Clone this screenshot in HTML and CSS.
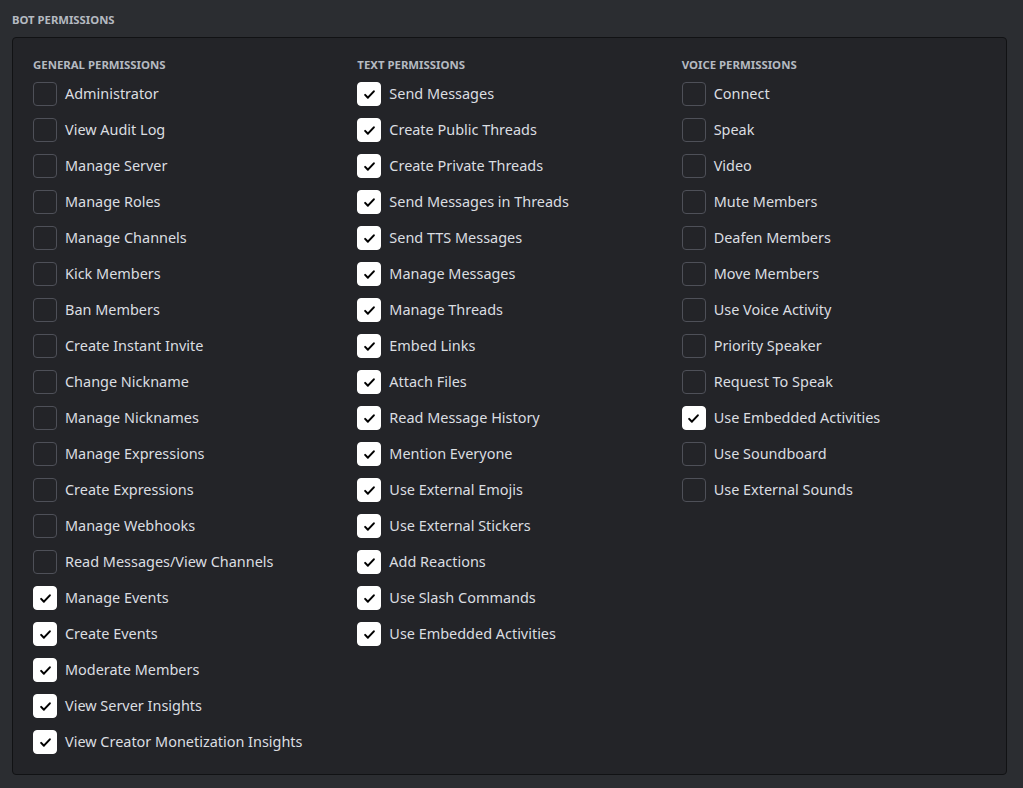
FILE: index.html
```html
<!DOCTYPE html>
<html>
<head>
<meta charset="utf-8">
<link rel="stylesheet" href="styles.css">
</head>
<body>
<div class="page">
  <h2 class="title">Bot Permissions</h2>
  <div class="panel">
    <div class="col">
      <h3 class="col-title">General Permissions</h3>
      <label class="row"><span class="box"></span><span class="label">Administrator</span></label>
      <label class="row"><span class="box"></span><span class="label">View Audit Log</span></label>
      <label class="row"><span class="box"></span><span class="label">Manage Server</span></label>
      <label class="row"><span class="box"></span><span class="label">Manage Roles</span></label>
      <label class="row"><span class="box"></span><span class="label">Manage Channels</span></label>
      <label class="row"><span class="box"></span><span class="label">Kick Members</span></label>
      <label class="row"><span class="box"></span><span class="label">Ban Members</span></label>
      <label class="row"><span class="box"></span><span class="label">Create Instant Invite</span></label>
      <label class="row"><span class="box"></span><span class="label">Change Nickname</span></label>
      <label class="row"><span class="box"></span><span class="label">Manage Nicknames</span></label>
      <label class="row"><span class="box"></span><span class="label">Manage Expressions</span></label>
      <label class="row"><span class="box"></span><span class="label">Create Expressions</span></label>
      <label class="row"><span class="box"></span><span class="label">Manage Webhooks</span></label>
      <label class="row"><span class="box"></span><span class="label">Read Messages/View Channels</span></label>
      <label class="row"><span class="box on"><svg viewBox="0 0 24 24"><path d="M6.5 12.5l3.5 3.5 7.5-8"/></svg></span><span class="label">Manage Events</span></label>
      <label class="row"><span class="box on"><svg viewBox="0 0 24 24"><path d="M6.5 12.5l3.5 3.5 7.5-8"/></svg></span><span class="label">Create Events</span></label>
      <label class="row"><span class="box on"><svg viewBox="0 0 24 24"><path d="M6.5 12.5l3.5 3.5 7.5-8"/></svg></span><span class="label">Moderate Members</span></label>
      <label class="row"><span class="box on"><svg viewBox="0 0 24 24"><path d="M6.5 12.5l3.5 3.5 7.5-8"/></svg></span><span class="label">View Server Insights</span></label>
      <label class="row"><span class="box on"><svg viewBox="0 0 24 24"><path d="M6.5 12.5l3.5 3.5 7.5-8"/></svg></span><span class="label">View Creator Monetization Insights</span></label>
    </div>
    <div class="col">
      <h3 class="col-title">Text Permissions</h3>
      <label class="row"><span class="box on"><svg viewBox="0 0 24 24"><path d="M6.5 12.5l3.5 3.5 7.5-8"/></svg></span><span class="label">Send Messages</span></label>
      <label class="row"><span class="box on"><svg viewBox="0 0 24 24"><path d="M6.5 12.5l3.5 3.5 7.5-8"/></svg></span><span class="label">Create Public Threads</span></label>
      <label class="row"><span class="box on"><svg viewBox="0 0 24 24"><path d="M6.5 12.5l3.5 3.5 7.5-8"/></svg></span><span class="label">Create Private Threads</span></label>
      <label class="row"><span class="box on"><svg viewBox="0 0 24 24"><path d="M6.5 12.5l3.5 3.5 7.5-8"/></svg></span><span class="label">Send Messages in Threads</span></label>
      <label class="row"><span class="box on"><svg viewBox="0 0 24 24"><path d="M6.5 12.5l3.5 3.5 7.5-8"/></svg></span><span class="label">Send TTS Messages</span></label>
      <label class="row"><span class="box on"><svg viewBox="0 0 24 24"><path d="M6.5 12.5l3.5 3.5 7.5-8"/></svg></span><span class="label">Manage Messages</span></label>
      <label class="row"><span class="box on"><svg viewBox="0 0 24 24"><path d="M6.5 12.5l3.5 3.5 7.5-8"/></svg></span><span class="label">Manage Threads</span></label>
      <label class="row"><span class="box on"><svg viewBox="0 0 24 24"><path d="M6.5 12.5l3.5 3.5 7.5-8"/></svg></span><span class="label">Embed Links</span></label>
      <label class="row"><span class="box on"><svg viewBox="0 0 24 24"><path d="M6.5 12.5l3.5 3.5 7.5-8"/></svg></span><span class="label">Attach Files</span></label>
      <label class="row"><span class="box on"><svg viewBox="0 0 24 24"><path d="M6.5 12.5l3.5 3.5 7.5-8"/></svg></span><span class="label">Read Message History</span></label>
      <label class="row"><span class="box on"><svg viewBox="0 0 24 24"><path d="M6.5 12.5l3.5 3.5 7.5-8"/></svg></span><span class="label">Mention Everyone</span></label>
      <label class="row"><span class="box on"><svg viewBox="0 0 24 24"><path d="M6.5 12.5l3.5 3.5 7.5-8"/></svg></span><span class="label">Use External Emojis</span></label>
      <label class="row"><span class="box on"><svg viewBox="0 0 24 24"><path d="M6.5 12.5l3.5 3.5 7.5-8"/></svg></span><span class="label">Use External Stickers</span></label>
      <label class="row"><span class="box on"><svg viewBox="0 0 24 24"><path d="M6.5 12.5l3.5 3.5 7.5-8"/></svg></span><span class="label">Add Reactions</span></label>
      <label class="row"><span class="box on"><svg viewBox="0 0 24 24"><path d="M6.5 12.5l3.5 3.5 7.5-8"/></svg></span><span class="label">Use Slash Commands</span></label>
      <label class="row"><span class="box on"><svg viewBox="0 0 24 24"><path d="M6.5 12.5l3.5 3.5 7.5-8"/></svg></span><span class="label">Use Embedded Activities</span></label>
    </div>
    <div class="col">
      <h3 class="col-title">Voice Permissions</h3>
      <label class="row"><span class="box"></span><span class="label">Connect</span></label>
      <label class="row"><span class="box"></span><span class="label">Speak</span></label>
      <label class="row"><span class="box"></span><span class="label">Video</span></label>
      <label class="row"><span class="box"></span><span class="label">Mute Members</span></label>
      <label class="row"><span class="box"></span><span class="label">Deafen Members</span></label>
      <label class="row"><span class="box"></span><span class="label">Move Members</span></label>
      <label class="row"><span class="box"></span><span class="label">Use Voice Activity</span></label>
      <label class="row"><span class="box"></span><span class="label">Priority Speaker</span></label>
      <label class="row"><span class="box"></span><span class="label">Request To Speak</span></label>
      <label class="row"><span class="box on"><svg viewBox="0 0 24 24"><path d="M6.5 12.5l3.5 3.5 7.5-8"/></svg></span><span class="label">Use Embedded Activities</span></label>
      <label class="row"><span class="box"></span><span class="label">Use Soundboard</span></label>
      <label class="row"><span class="box"></span><span class="label">Use External Sounds</span></label>
    </div>
  </div>
</div>
</body>
</html>
```
FILE: styles.css
```css
html, body {
  margin: 0;
  padding: 0;
  background: #2b2d31;
}
body {
  font-family: "Noto Sans", "Open Sans", sans-serif;
  color: #dbdee1;
}
.page {
  padding: 13px 16px 14px 12px;
}
.title {
  margin: 0 0 10px 0;
  font-size: 11.3px;
  line-height: 14px;
  font-weight: 700;
  text-transform: uppercase;
  color: #b5bac1;
  letter-spacing: 0;
}
.panel {
  background: #232428;
  border: 1px solid #111214;
  border-radius: 4px;
  padding: 20px 0 8px 20px;
  display: grid;
  grid-template-columns: repeat(3, 1fr);
  align-items: start;
}
.col {
  display: flex;
  flex-direction: column;
}
.col-title {
  margin: 0 0 10px 0;
  font-size: 11.4px;
  line-height: 14px;
  font-weight: 700;
  text-transform: uppercase;
  color: #b5bac1;
}
.row {
  display: flex;
  align-items: center;
  gap: 8px;
  height: 24px;
  margin-bottom: 12px;
}
.box {
  width: 24px;
  height: 24px;
  box-sizing: border-box;
  border: 1px solid #4e5058;
  border-radius: 4px;
  flex: none;
  display: flex;
  align-items: center;
  justify-content: center;
}
.box.on {
  background: #ffffff;
  border-color: #ffffff;
}
.box svg {
  width: 19px;
  height: 19px;
}
.box svg path {
  fill: none;
  stroke: #000000;
  stroke-width: 2.6;
  stroke-linecap: round;
  stroke-linejoin: round;
}
.label {
  font-size: 14.45px;
  line-height: 20px;
  color: #dbdee1;
  white-space: nowrap;
}
```
